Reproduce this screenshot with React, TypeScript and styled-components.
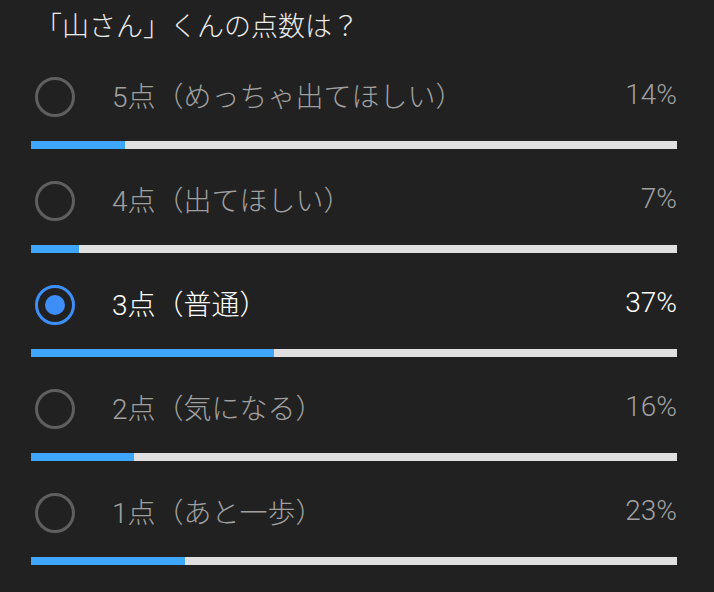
import styled, { createGlobalStyle } from 'styled-components'

const GlobalStyle = createGlobalStyle`
  html, body {
    margin: 0;
    padding: 0;
    background: #212121;
  }
  body {
    font-family: Roboto, "Noto Sans CJK JP", sans-serif;
  }
`

const PollWrapper = styled.div`
  width: 714px;
  height: 592px;
  box-sizing: border-box;
  padding: 10px 37px 0 31px;
  background: #212121;
  overflow: hidden;
`

const Question = styled.div`
  font-size: 27px;
  line-height: 34px;
  font-weight: 300;
  color: #ececec;
  margin-bottom: 25px;
  padding-left: 4px;
`

const Option = styled.div`
  padding-bottom: 24px;
`

const OptionHeader = styled.div<{ selected: boolean }>`
  display: flex;
  align-items: center;
  height: 56px;
  margin-bottom: 16px;
  font-size: 28px;
  font-weight: 300;
  color: ${(p) => (p.selected ? '#ffffff' : '#a0a0a0')};
`

const Radio = styled.div<{ selected: boolean }>`
  position: relative;
  width: 40px;
  height: 40px;
  box-sizing: border-box;
  margin-left: 4px;
  margin-right: 37px;
  border-radius: 50%;
  border: 3.5px solid ${(p) => (p.selected ? '#3d8ef7' : '#5f5f5f')};
  flex-shrink: 0;

  &::after {
    content: '';
    display: ${(p) => (p.selected ? 'block' : 'none')};
    position: absolute;
    left: 50%;
    top: 50%;
    width: 20px;
    height: 20px;
    margin: -10px 0 0 -10px;
    border-radius: 50%;
    background: #3d8ef7;
  }
`

const Label = styled.div`
  flex: 1;
  margin-bottom: 5px;
`

const Percent = styled.div`
  font-family: Roboto, sans-serif;
  margin-bottom: 5px;
`

const Bar = styled.div`
  height: 8px;
  background: #e0e0e0;
`

const BarFill = styled.div`
  height: 100%;
  background: #3ea6ff;
`

const options = [
  { label: '5点（めっちゃ出てほしい）', percent: 14, fill: 14.5 },
  { label: '4点（出てほしい）', percent: 7, fill: 7.4 },
  { label: '3点（普通）', percent: 37, fill: 37.6, selected: true },
  { label: '2点（気になる）', percent: 16, fill: 16 },
  { label: '1点（あと一歩）', percent: 23, fill: 23.8 },
]

const App = () => {
  return (
    <PollWrapper>
      <GlobalStyle />
      <Question>「山さん」くんの点数は？</Question>
      {options.map((o) => (
        <Option key={o.label}>
          <OptionHeader selected={!!o.selected}>
            <Radio selected={!!o.selected} />
            <Label>{o.label}</Label>
            <Percent>{o.percent}%</Percent>
          </OptionHeader>
          <Bar>
            <BarFill style={{ width: `${o.fill}%` }} />
          </Bar>
        </Option>
      ))}
    </PollWrapper>
  )
}

export default App
